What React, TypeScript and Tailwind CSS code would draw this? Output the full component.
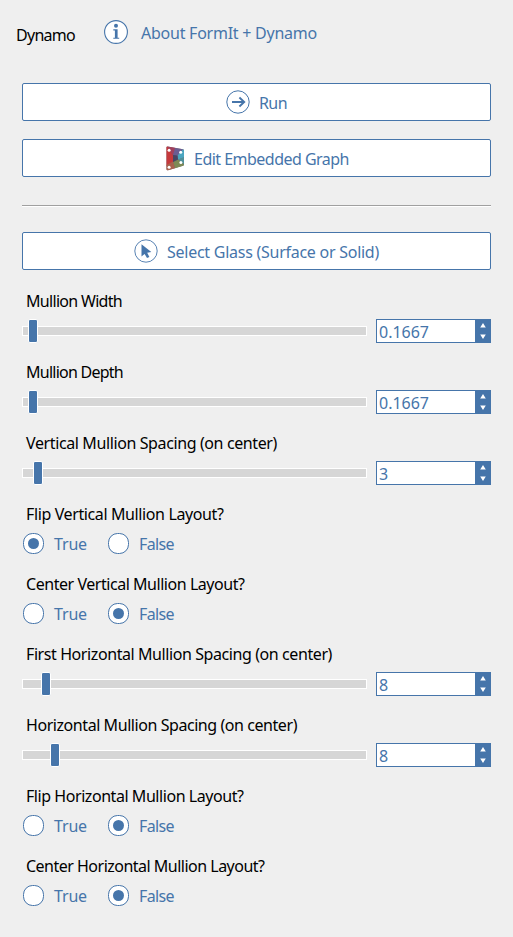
import type { ReactNode } from "react";

const BLUE = "#4675aa";

function T({ children, w, className = "" }: { children: string; w: number; className?: string }) {
  // Width is known per string; glyph spacing is tuned to fill it
  return (
    <span
      className={`block whitespace-nowrap leading-5 ${className}`}
      ref={(el) => {
        if (!el) return;
        el.style.letterSpacing = "0px";
        el.style.width = "max-content";
        const natural = el.getBoundingClientRect().width;
        el.style.letterSpacing = `${(w - natural) / children.length}px`;
        el.style.width = `${w}px`;
      }}
    >
      {children}
    </span>
  );
}

function InfoIcon() {
  return (
    <svg width="24" height="24" viewBox="0 0 24 24" fill={BLUE}>
      <circle cx="12" cy="12" r="11.4" fill="#fff" stroke={BLUE} strokeWidth="1.1" />
      <circle cx="12" cy="5.8" r="2" />
      <path d="M9.3 9.3h4.3v8.4h1.6v1.1H9.3v-1.1h1.6v-7.3H9.3z" />
    </svg>
  );
}

function RunIcon() {
  return (
    <svg width="24" height="24" viewBox="0 0 24 24" fill="none" stroke={BLUE}>
      <circle cx="12" cy="12" r="11.2" strokeWidth="1" />
      <path d="M6 12h12M13.4 7.500l4.800 4.500-4.800 4.500" strokeWidth="1.900" />
    </svg>
  );
}

function CursorIcon() {
  return (
    <svg width="24" height="24" viewBox="0 0 24 24">
      <circle cx="12" cy="12" r="11.2" fill="none" stroke={BLUE} strokeWidth="0.9" />
      <path d="M7.5 5.3v12.2l3.1-2.6 2.4 4.2 2.4-1.2-2.2-4.1 4.1-.7z" fill={BLUE} />
    </svg>
  );
}

function GraphIcon() {
  return (
    <svg width="20" height="25" viewBox="0 0 20 25">
      <path d="M2.500.5 18 3.200q1 .2 1 1.200v14q0 1-1 1.400L3 24.300q-1.500.3-1.500-1.300V1.500q0-1 1-1z" fill="#77606c" />
      <path d="M1.500 1.500q0-1 1-1L8 9v7L1.500 20z" fill="#c5393c" />
      <path d="M2.500.5 11 2l1 7-4 1z" fill="#a03f5c" />
      <path d="M10 1.900 18 3.200 12.500 10 8 9z" fill="#6a5c92" />
      <path d="M18 3.200q1 .2 1 1.200v7l-6 2-.5-4z" fill="#4ba5c0" />
      <path d="M19 11v7.400l-6-5z" fill="#51909a" />
      <path d="m13 13.500 6 4.900q0 1-1 1.400l-8 2.400L8 16z" fill="#7d8a55" />
      <path d="M1.500 19 8 15.500l2 6.700-7 2.100q-1.500.3-1.500-1.300z" fill="#a9624e" />
      <path d="m8 9 4.500.5.5 4L8 16z" fill="#474564" />
      <g fill="#fff">
        <circle cx="4.100" cy="4.300" r="1.500" />
        <circle cx="15.700" cy="6.300" r="1.500" />
        <circle cx="15.900" cy="16.500" r="1.500" />
        <circle cx="4.100" cy="21.300" r="1.500" />
      </g>
    </svg>
  );
}

function Button({ icon, label, w, className }: { icon: ReactNode; label: string; w: number; className: string }) {
  return (
    <button className={`flex h-[38px] w-[469px] items-center rounded-[2px] border border-[#4675aa] bg-white text-[#4675aa] ${className}`}>
      {icon}
      <T w={w} className="ml-[9px] mt-[2px] text-left">{label}</T>
    </button>
  );
}

function SliderField({ label, w, value, vw, pos }: { label: string; w: number; value: string; vw: number; pos: number }) {
  return (
    <div className="h-[71px]">
      <T w={w} className="ml-1">{label}</T>
      <div className="mt-2 flex h-6 items-center">
        <div className="relative h-[10px] w-[345px] border border-white bg-[#d6d6d6]">
          <div className="absolute -top-2 h-6 w-[10px] rounded-[2px] border border-white bg-[#4675aa]" style={{ left: pos }} />
        </div>
        <div className="ml-[9px] flex h-6 w-[115px] border border-[#4675aa] bg-white text-[#4675aa]">
          <div className="flex-1 pl-[2px] pt-[2px]">
            <T w={vw}>{value}</T>
          </div>
          <div className="w-[15px] bg-[#4675aa]">
            <svg width="15" height="22" viewBox="0 0 15 22" fill="#fff">
              <path d="M5.200 7.500 8 3l2.800 4.500zM5.200 14.500h5.600L8 19z" />
            </svg>
          </div>
        </div>
      </div>
    </div>
  );
}

function Radio({ on }: { on: boolean }) {
  return (
    <span className="flex h-[21px] w-[21px] items-center justify-center rounded-[9.5px] border border-[#4675aa] bg-white">
      {on && <span className="h-[11px] w-[11px] rounded-full bg-[#4675aa]" />}
    </span>
  );
}

function RadioField({ label, w, value }: { label: string; w: number; value: boolean }) {
  return (
    <div className="h-[70px]">
      <T w={w} className="ml-1">{label}</T>
      <div className="ml-px mt-[9px] flex h-[21px] items-center text-[#4675aa]">
        <Radio on={value} />
        <T w={33} className="ml-[10px]">True</T>
        <span className="w-[21px]" />
        <Radio on={!value} />
        <T w={35} className="ml-[10px]">False</T>
      </div>
    </div>
  );
}

export default function App() {
  return (
    <main className="h-[937px] w-[513px] overflow-hidden bg-[#efefef] pl-[22px] font-['Noto_Sans',sans-serif] text-[16px] text-black">
      <header className="-ml-[7px] flex h-[83px] items-start pt-5">
        <T w={59} className="ml-px mt-[5px]">Dynamo</T>
        <span className="ml-[29px]"><InfoIcon /></span>
        <T w={176} className="ml-[13px] mt-[3px] text-[#4675aa]">About FormIt + Dynamo</T>
      </header>
      <Button icon={<RunIcon />} label="Run" w={28} className="pl-[203px]" />
      <Button icon={<GraphIcon />} label="Edit Embedded Graph" w={155} className="mt-[18px] pl-[142px]" />
      <div className="mt-7 h-[2px] w-[469px] border-b border-t border-b-white border-t-[#a0a0a0]" />
      <Button icon={<CursorIcon />} label="Select Glass (Surface or Solid)" w={212} className="mt-[25px] pl-[111px]" />
      <div className="mt-[21px]">
        <SliderField label="Mullion Width" w={96} value="0.1667" vw={50} pos={5} />
        <SliderField label="Mullion Depth" w={97} value="0.1667" vw={50} pos={5} />
        <SliderField label="Vertical Mullion Spacing (on center)" w={251} value="3" vw={9} pos={10} />
        <RadioField label="Flip Vertical Mullion Layout?" w={197.5} value={true} />
        <RadioField label="Center Vertical Mullion Layout?" w={218.5} value={false} />
        <SliderField label="First Horizontal Mullion Spacing (on center)" w={306} value="8" vw={9} pos={18} />
        <SliderField label="Horizontal Mullion Spacing (on center)" w={271} value="8" vw={9} pos={27} />
        <RadioField label="Flip Horizontal Mullion Layout?" w={217.5} value={false} />
        <RadioField label="Center Horizontal Mullion Layout?" w={238.500} value={false} />
      </div>
    </main>
  );
}
